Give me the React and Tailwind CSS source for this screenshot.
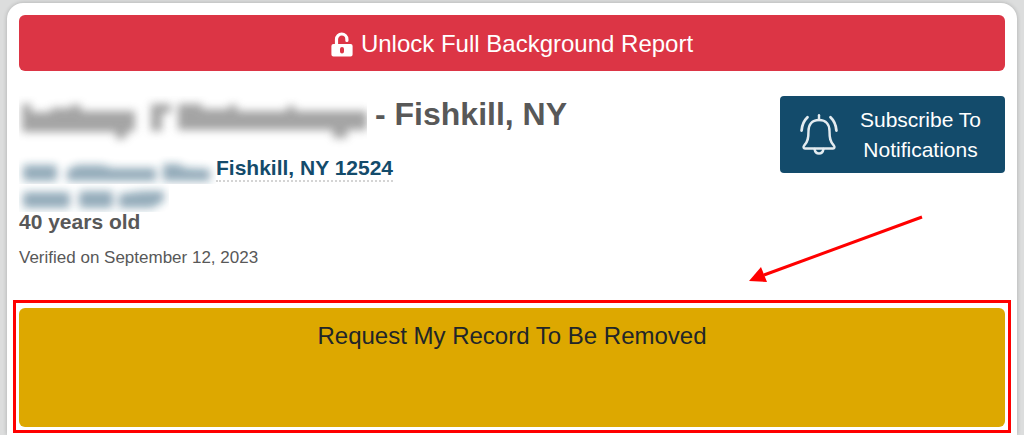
import React from "react";

function UnlockIcon() {
  return (
    <svg viewBox="0 0 22 25" className="h-[25px] w-[22px] shrink-0" aria-hidden="true">
      <path d="M5.5 13V7.2a5.2 5.2 0 0 1 10.4 0V8.500" fill="none" stroke="#fff" strokeWidth="3.2" strokeLinecap="round" />
      <path
        fillRule="evenodd"
        fill="#fff"
        d="M2.4 12h17.2a2 2 0 0 1 2 2v8.500a2 2 0 0 1-2 2H2.400a2 2 0 0 1-2-2V14a2 2 0 0 1 2-2zM11 15a2 2 0 0 0-2 2v2.500a2 2 0 0 0 4 0V17a2 2 0 0 0-2-2z"
      />
    </svg>
  );
}

function BellIcon() {
  return (
    <svg
      viewBox="0 0 40 42"
      className="h-[42px] w-[40px] shrink-0"
      fill="none"
      stroke="#e3ebf0"
      strokeWidth="2.4"
      strokeLinecap="round"
      strokeLinejoin="round"
      aria-hidden="true"
    >
      <path d="M19 1.200V6" />
      <path d="M19 6C11.500 6 8.500 11 8.500 17C8.500 24 8 28 4.200 31.500C3 33 3.500 34.500 5 34.500H33C34.500 34.500 35 33 33.800 31.500C30 28 29.500 24 29.500 17C29.500 11 26.500 6 19 6Z" />
      <path d="M14.500 35C15.500 41 22.500 41 23.500 35" />
      <path d="M7.500 3.200C4 6.500 2 11 1.600 16.500" strokeWidth="2.800" />
      <path d="M30.500 3.200C34 6.500 36 11 36.400 16.500" strokeWidth="2.800" />
    </svg>
  );
}

function HiddenName() {
  return (
    <svg viewBox="0 0 348 52" className="h-[52px] w-[348px] shrink-0" role="img" aria-label="Name hidden">
      <defs>
        <filter id="soft-name" x="-10%" y="-50%" width="120%" height="200%">
          <feGaussianBlur stdDeviation="4.5" />
        </filter>
      </defs>
      <g filter="url(#soft-name)" fill="#5a5a5a" opacity="0.55">
        <path d="M3 8h9v8h20v-4h20v-3h10v6h54v20h-6l-5 8h-8v-7H3z" />
        <path d="M132 8h20v9h-9v18h-11z" />
        <path d="M159 8h24v5h27v-4h8v6h50v-5h8v5h72v19h-20v8h-14v-8H159z" />
      </g>
    </svg>
  );
}

function HiddenAddress() {
  return (
    <svg viewBox="0 0 197 28" className="h-[28px] w-[197px] shrink-0" role="img" aria-label="Street hidden">
      <defs>
        <filter id="soft-line" x="-10%" y="-80%" width="120%" height="260%">
          <feGaussianBlur stdDeviation="4" />
        </filter>
      </defs>
      <g filter="url(#soft-line)" fill="#134b6b" opacity="0.46">
        <rect x="4" y="9" width="34" height="16" rx="3" />
        <path d="M48 14l10-5h25l10 3h44v13H48z" />
        <path d="M144 8h16l6 4 25 1v12h-47z" />
      </g>
    </svg>
  );
}

function HiddenPhone() {
  return (
    <svg viewBox="0 0 150 28" className="h-[28px] w-[150px]" role="img" aria-label="Phone hidden">
      <g filter="url(#soft-line)" fill="#134b6b" opacity="0.46">
        <rect x="4" y="8" width="47" height="16" rx="3" />
        <rect x="60" y="7" width="34" height="17" rx="3" />
        <path d="M100 10l24-3h21v10l-12 7h-33z" />
      </g>
    </svg>
  );
}

export default function App() {
  return (
    <div className="flex min-h-screen flex-col bg-[#dcdddd] px-[7px] pt-[3px] font-['Liberation_Sans',Arial,sans-serif] text-[#585858]">
      <main className="flex-1 rounded-t-[16px] bg-white p-3 pb-2 shadow-[0_0_4px_rgba(0,0,0,0.22)]">
        <button type="button" className="flex h-14 w-full items-center justify-center gap-2 rounded-md bg-[#dc3545] pt-0.5 text-2xl text-white">
          <UnlockIcon />
          Unlock Full Background Report
        </button>

        <div className="flex items-start justify-between pt-[25px]">
          <section>
            <h1 className="flex text-[32px] leading-9 font-bold">
              <HiddenName />
              <span className="pl-2">- Fishkill, NY</span>
            </h1>
            <div className="flex items-start pt-2 text-[21px] font-bold text-[#134b6b]">
              <HiddenAddress />
              <a href="#address" className="border-b-2 border-dotted border-[#d4d4d4] leading-6">
                Fishkill, NY 12524
              </a>
            </div>
            <HiddenPhone />
            <p className="text-[21px] leading-5 font-bold">40 years old</p>
            <p className="pt-3 text-[17px] leading-7">Verified on September 12, 2023</p>
          </section>
          <button type="button" className="flex h-[77px] w-[225px] shrink-0 items-center gap-4 rounded bg-[#134b6b] px-5 text-[21px] leading-[30px] text-white">
            <BellIcon />
            <span className="flex-1">
              Subscribe To <br />
              Notifications
            </span>
          </button>
        </div>

        <div className="relative mt-9">
          <button type="button" className="flex h-[119px] w-full items-start justify-center rounded-md bg-[#dda800] pt-3 text-2xl text-[#212529]">
            Request My Record To Be Removed
          </button>
          <span className="pointer-events-none absolute -inset-x-1.5 -top-2 -bottom-1.5 border-3 border-[#ff0000]" />
          <svg viewBox="0 0 176 72" className="pointer-events-none absolute right-[81px] bottom-full mb-[23px] h-[72px] w-[176px]" aria-hidden="true">
            <path d="M174 4L16 62" stroke="#ff0000" strokeWidth="3" />
            <path d="M1 68L13 54L19 69Z" fill="#ff0000" />
          </svg>
        </div>
      </main>
    </div>
  );
}
